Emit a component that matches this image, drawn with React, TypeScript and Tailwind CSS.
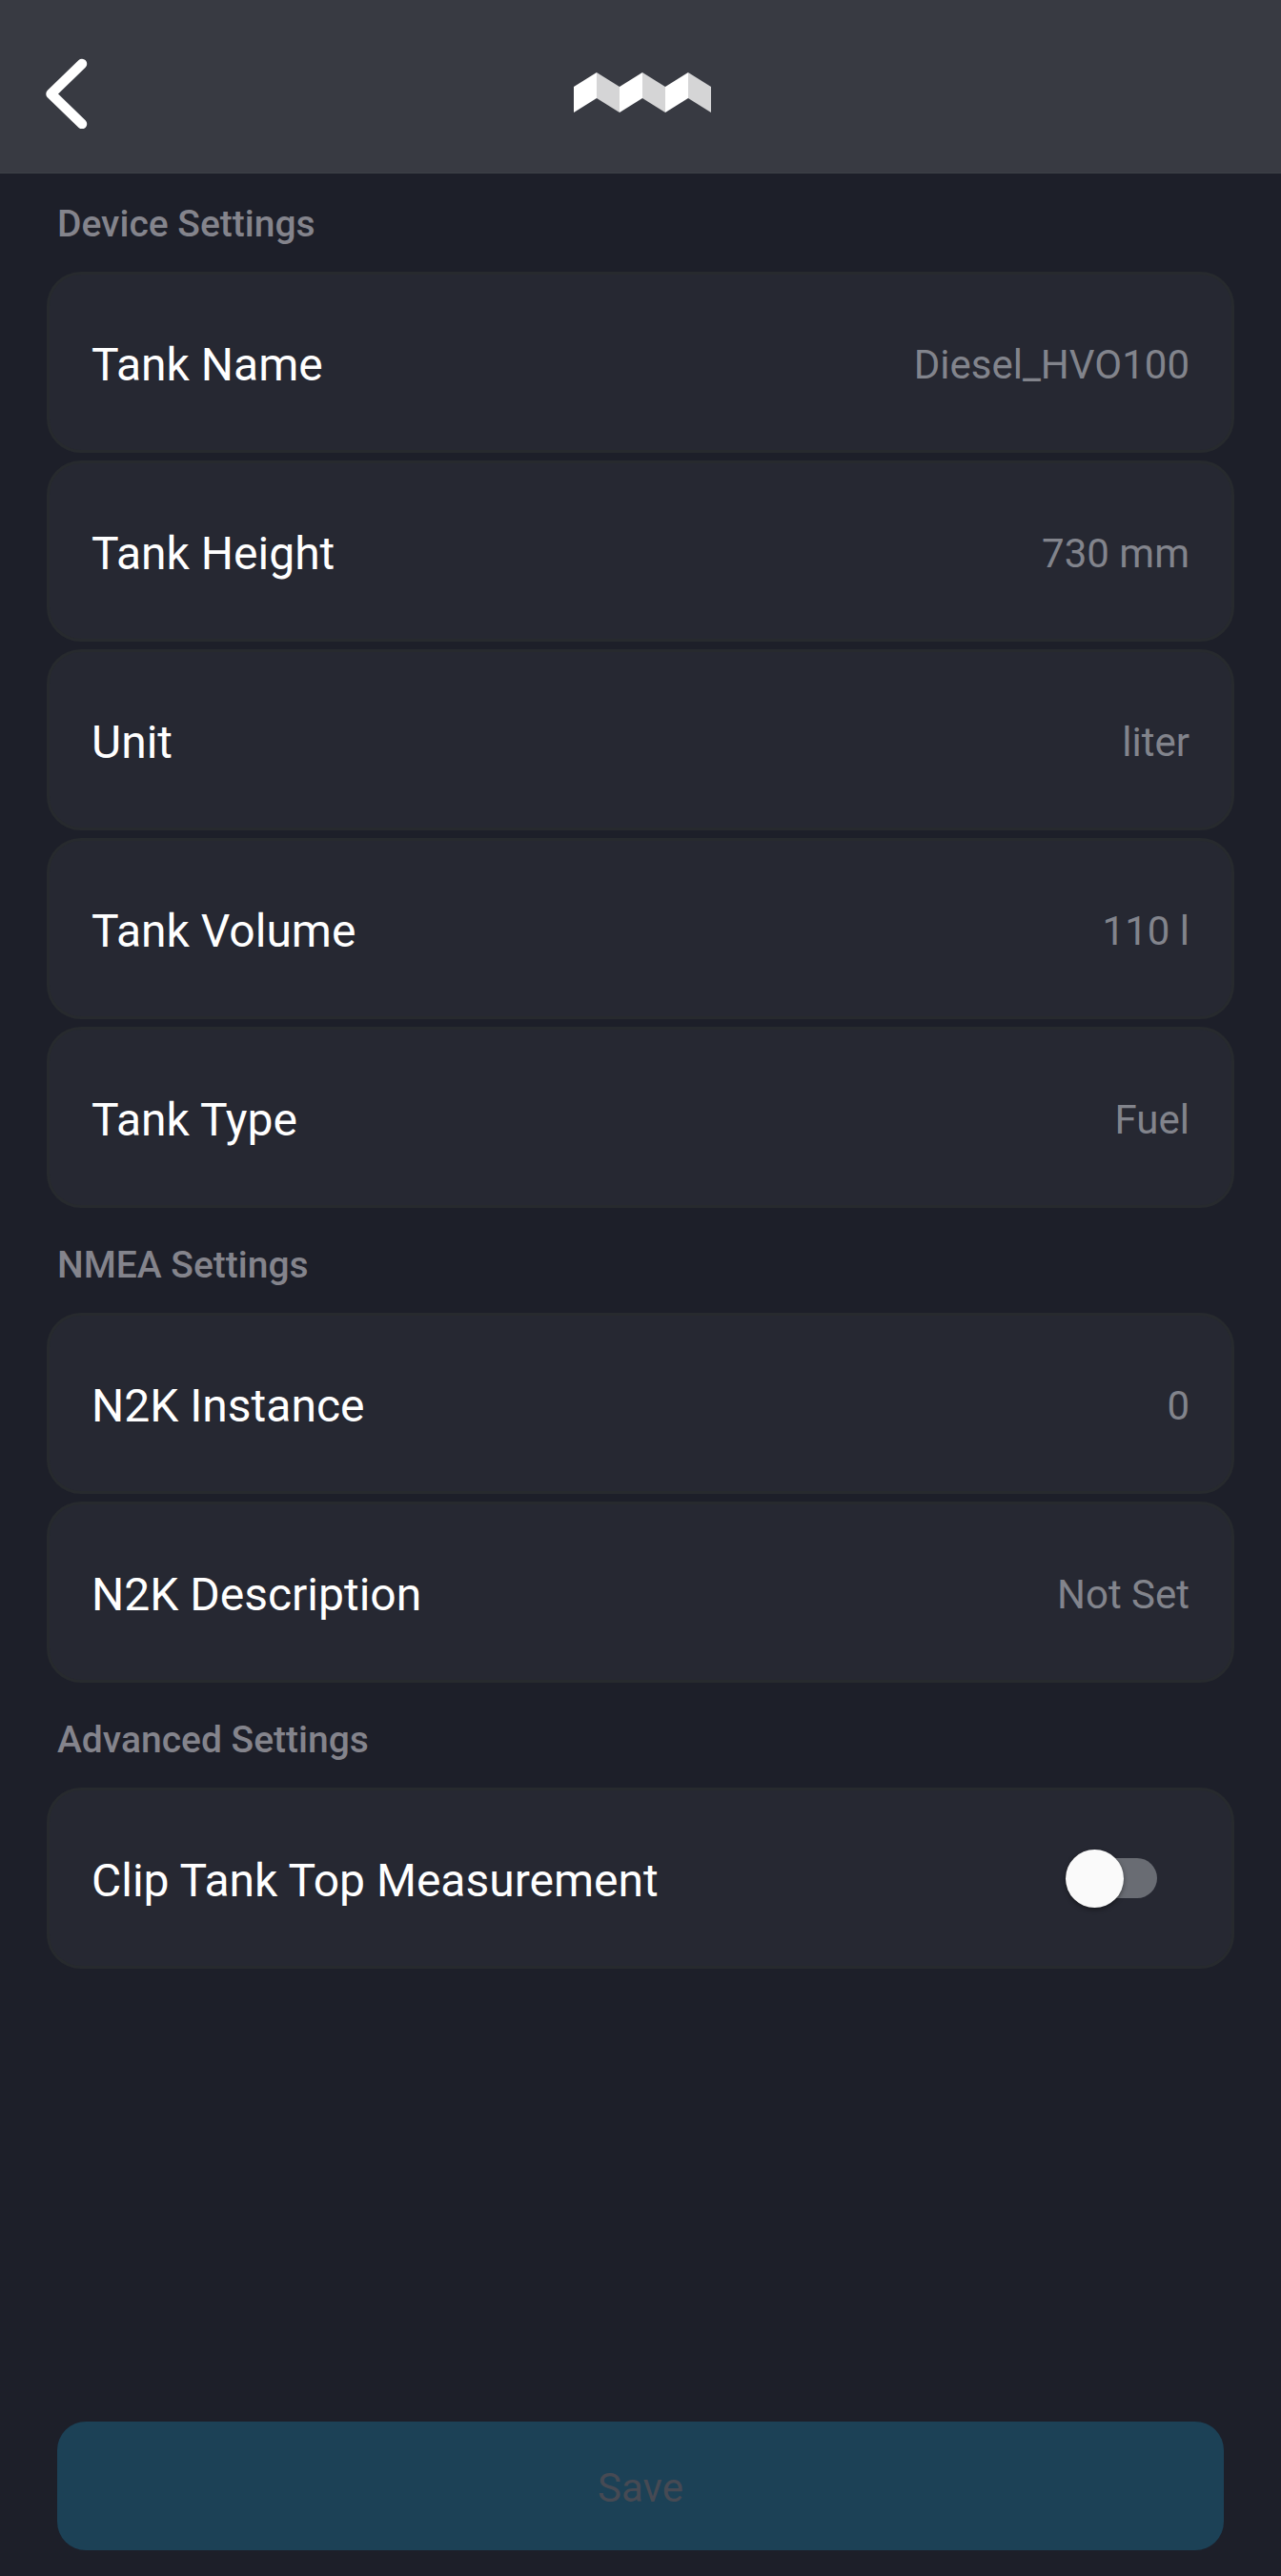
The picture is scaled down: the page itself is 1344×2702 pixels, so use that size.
import { useState } from 'react';

const deviceSettings = [
  { label: 'Tank Name', value: 'Diesel_HVO100' },
  { label: 'Tank Height', value: '730 mm' },
  { label: 'Unit', value: 'liter' },
  { label: 'Tank Volume', value: '110 l' },
  { label: 'Tank Type', value: 'Fuel' },
];

const nmeaSettings = [
  { label: 'N2K Instance', value: '0' },
  { label: 'N2K Description', value: 'Not Set' },
];

const cardClass =
  'flex w-full min-h-[190px] items-center justify-between gap-6 rounded-[36px] border-3 border-[#272a2e] bg-[#262832] px-11 text-left';

function Logo() {
  return (
    <svg width="148" height="44" viewBox="-4 0 148 44" role="img" aria-label="Logo">
      {[0, 48, 96].map((x) => (
        <g key={x} transform={`translate(${x} 0)`}>
          <path d="M0 15 24 0v27L0 42z" fill="#ffffff" />
          <path d="M24 0 48 15v27L24 27z" fill="#d5d5d6" />
        </g>
      ))}
    </svg>
  );
}

function Section({ title, children }: { title: string; children: React.ReactNode }) {
  return (
    <section>
      <h2 className="mb-[27px] px-[11px] text-[39px] leading-[46px] font-medium text-[#84848c]">{title}</h2>
      <div className="flex flex-col gap-2">{children}</div>
    </section>
  );
}

function SettingRow({ label, value }: { label: string; value: string }) {
  return (
    <button type="button" className={cardClass}>
      <span className="pt-1.5 text-[48px] leading-[56px] text-white">{label}</span>
      <span className="pt-1.5 text-[42px] leading-[50px] text-[#82848c]">{value}</span>
    </button>
  );
}

export default function App() {
  const [clipTop, setClipTop] = useState(false);

  return (
    <div className="flex min-h-screen flex-col bg-[#1d1f29] font-[Roboto,sans-serif]">
      <header className="grid grid-cols-3 items-center border-b border-[#3d4046] bg-[#383a42] px-12 pt-[61px] pb-[46px]">
        <button type="button" aria-label="Back" className="justify-self-start">
          <svg width="44" height="74" viewBox="0 0 44 74" fill="none" className="block">
            <path
              d="M38 6 5.5 37.5 38 69"
              stroke="#ffffff"
              strokeWidth="10.5"
              strokeLinecap="round"
              strokeLinejoin="round"
            />
          </svg>
        </button>
        <div className="justify-self-center">
          <Logo />
        </div>
      </header>

      <main className="flex flex-1 flex-col gap-[37px] px-[49px] pt-[30px]">
        <Section title="Device Settings">
          {deviceSettings.map((item) => (
            <SettingRow key={item.label} {...item} />
          ))}
        </Section>

        <Section title="NMEA Settings">
          {nmeaSettings.map((item) => (
            <SettingRow key={item.label} {...item} />
          ))}
        </Section>

        <Section title="Advanced Settings">
          <div className={cardClass}>
            <label htmlFor="clip-top" className="pt-1.5 text-[48px] leading-[56px] text-white">
              Clip Tank Top Measurement
            </label>
            <input
              id="clip-top"
              type="checkbox"
              role="switch"
              checked={clipTop}
              onChange={(e) => setClipTop(e.target.checked)}
              className="mr-[34px] flex h-[42px] w-[90px] shrink-0 appearance-none items-center rounded-full bg-[#696c73] before:-ml-1.5 before:size-[61px] before:shrink-0 before:rounded-full before:bg-[#fafafa] before:shadow-[0_2px_5px_rgba(0,0,0,0.4)] before:transition-transform before:content-[''] checked:bg-[#1f6f96] checked:before:translate-x-9"
            />
          </div>
        </Section>
      </main>

      <footer className="px-[60px] pt-10 pb-[27px]">
        <button
          type="button"
          disabled
          className="w-full rounded-[30px] bg-[#1c4156] pt-[45px] pb-10 text-[42px] leading-[50px] text-[#464a54]"
        >
          Save
        </button>
      </footer>
    </div>
  );
}
